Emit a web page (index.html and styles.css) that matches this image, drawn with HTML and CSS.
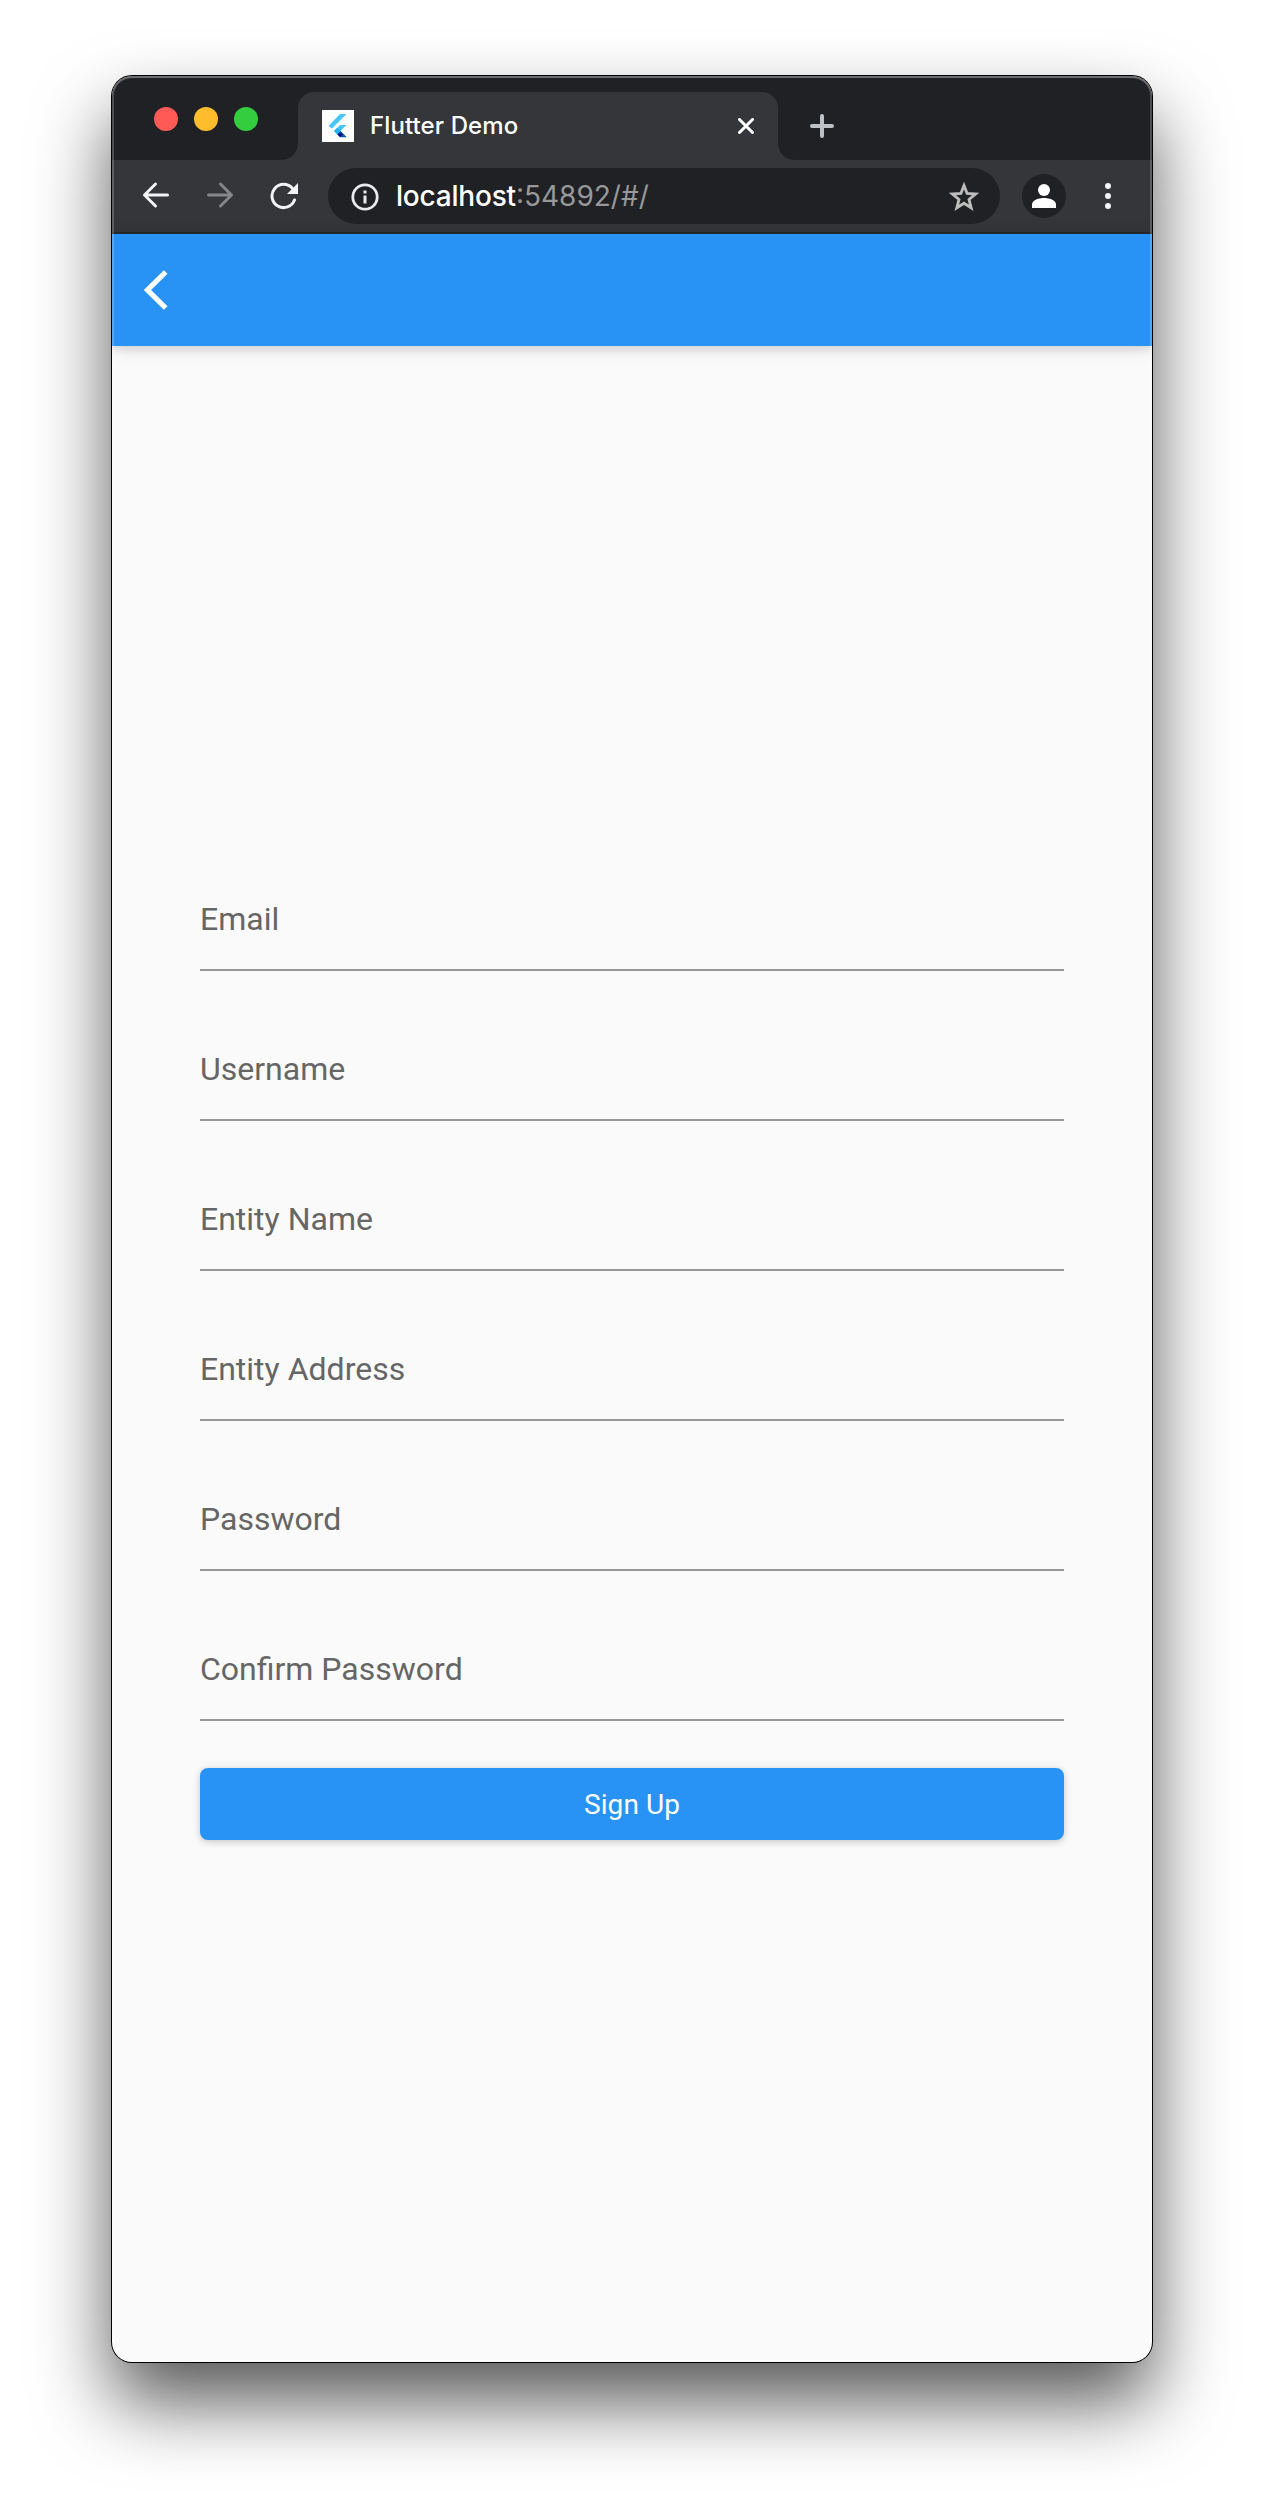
FILE: index.html
```html
<!DOCTYPE html>
<html lang="en">
<head>
<meta charset="utf-8">
<title>Flutter Demo</title>
<link rel="stylesheet" href="styles.css">
</head>
<body>
<div class="window">
  <header class="tabstrip">
    <div class="lights">
      <span class="light light-close"></span>
      <span class="light light-min"></span>
      <span class="light light-max"></span>
    </div>
    <div class="tab">
      <svg class="favicon" width="32" height="32" viewBox="0 0 32 32">
        <rect width="32" height="32" fill="#fff"/>
        <path d="M18 4h6.500L10 18.500 6.500 16z" fill="#47c5fb"/>
        <path d="M18 15h6.500L18.500 21l6 6H18l-6-6z" fill="#47c5fb"/>
        <path d="M12 21l3.300-3.300L18.600 21l-3.300 3.300z" fill="#22b2f2"/>
        <path d="M15.300 24.300L18.600 21l6 6.200H18z" fill="#00569e"/>
        <path d="M15.300 24.300l3.300-1.500 2.400 1.500-3 2.500z" fill="#00108a"/>
      </svg>
      <span class="tab-title">Flutter Demo</span>
      <svg class="tab-close" width="16" height="16" viewBox="0 0 16 16"><path d="M1.500 1.500l13 13M14.500 1.500l-13 13" stroke="#fff" stroke-width="3" stroke-linecap="round"/></svg>
    </div>
    <svg class="new-tab" width="24" height="24" viewBox="0 0 24 24"><path d="M12 2v20M2 12h20" stroke="#bdc1c6" stroke-width="4" stroke-linecap="round"/></svg>
  </header>
  <div class="toolbar">
    <svg class="nav-back" width="28" height="28" viewBox="0 0 28 28" fill="none" stroke="#f1f3f4" stroke-width="3" stroke-linecap="round" stroke-linejoin="round"><path d="M25.500 14H2.500M13.500 3L2.500 14l11 11"/></svg>
    <svg class="nav-forward" width="28" height="28" viewBox="0 0 28 28" fill="none" stroke="#85868a" stroke-width="3" stroke-linecap="round" stroke-linejoin="round"><path d="M2.500 14h23M14.500 3l11 11-11 11"/></svg>
    <svg class="nav-reload" width="28" height="28" viewBox="0 0 28 28"><path d="M24.500 18A11.600 11.600 0 1 1 22.500 6.500" fill="none" stroke="#f1f3f4" stroke-width="3" stroke-linecap="round"/><path d="M28 1v11h-11z" fill="#f1f3f4"/></svg>
    <div class="omnibox">
      <svg class="info" width="28" height="28" viewBox="0 0 28 28"><circle cx="14" cy="14" r="12.200" fill="none" stroke="#e8eaed" stroke-width="2.800"/><path d="M12.500 7.500h3v3h-3zM12.500 12.500h3v8h-3z" fill="#e8eaed"/></svg>
      <span class="url">localhost<span class="url-rest">:54892/#/</span></span>
      <svg class="star" width="30" height="29" viewBox="0 0 30 29"><path d="M15 3.500l3.100 8 8.500.5-6.600 5.400 2.200 8.400L15 21.200l-7.200 4.600 2.200-8.400L3.400 12l8.500-.5z" fill="none" stroke="#bdbdbd" stroke-width="2.800"/></svg>
    </div>
    <svg class="avatar" width="44" height="44" viewBox="0 0 44 44"><circle cx="22" cy="22" r="22" fill="#202124"/><circle cx="22" cy="16" r="6" fill="#fff"/><path d="M10 34v-3.500c0-4.500 7-6.500 12-6.500s12 2 12 6.500V34z" fill="#fff"/></svg>
    <svg class="menu" width="6" height="26" viewBox="0 0 6 26" fill="#f1f3f4"><circle cx="3" cy="3" r="3"/><circle cx="3" cy="13" r="3"/><circle cx="3" cy="23" r="3"/></svg>
  </div>
  <main class="page">
    <div class="appbar">
      <svg width="24" height="40" viewBox="0 0 24 40"><path d="M21.700 2L3.500 20l18.200 18" fill="none" stroke="#fff" stroke-width="5.200"/></svg>
    </div>
    <form class="form">
      <div class="field">Email</div>
      <div class="field">Username</div>
      <div class="field">Entity Name</div>
      <div class="field">Entity Address</div>
      <div class="field">Password</div>
      <div class="field">Confirm Password</div>
      <button class="submit" type="button">Sign Up</button>
    </form>
  </main>
</div>
</body>
</html>
```
FILE: styles.css
```css
* { box-sizing: border-box; }
body {
  margin: 0;
  padding: 76px 112px 0;
  height: 2510px;
  background: #fff;
  overflow: hidden;
  font-family: Roboto, sans-serif;
}
svg { display: block; flex: none; }
.window {
  position: relative;
  width: 1040px;
  height: 2286px;
  border-radius: 20px;
  overflow: hidden;
  background: #fafafa;
  box-shadow: 0 0 0 1px #000, 0 40px 76px rgba(0, 0, 0, .66);
}
/* light rim drawn over the window content */
.window::after {
  content: "";
  position: absolute;
  inset: 0;
  border-radius: 20px;
  box-shadow: inset 0 0 0 2px rgba(255, 255, 255, .2), inset 0 2px 0 rgba(255, 255, 255, .18);
  pointer-events: none;
}
.tabstrip {
  height: 84px;
  display: flex;
  align-items: flex-end;
  background: #202124;
}
.lights {
  width: 186px;
  padding: 0 0 29px 42px;
  display: flex;
  gap: 16px;
}
.light { width: 24px; height: 24px; border-radius: 50%; }
.light-close { background: #ff5a56; }
.light-min { background: #ffbd2e; }
.light-max { background: #35cd40; }
.tab {
  position: relative;
  width: 480px;
  height: 68px;
  padding: 0 24px;
  display: flex;
  align-items: center;
  background: #35363a;
  border-radius: 16px 16px 0 0;
}
.tab::before, .tab::after {
  content: "";
  position: absolute;
  bottom: 0;
  width: 16px;
  height: 16px;
}
.tab::before { left: -16px; background: radial-gradient(circle at 0 0, transparent 15.500px, #35363a 16px); }
.tab::after { right: -16px; background: radial-gradient(circle at 100% 0, transparent 15.500px, #35363a 16px); }
.tab-title {
  flex: 1;
  margin-left: 16px;
  font: 450 24px/32px Inter, sans-serif;
  letter-spacing: .1px;
  color: #fff;
}
.new-tab { margin: 0 0 22px 32px; }
.toolbar {
  height: 74px;
  padding: 8px 41px 8px 30px;
  display: flex;
  align-items: flex-start;
  background: #35363a;
  border-bottom: 2px solid #292a2d;
}
.nav-back, .nav-forward { margin-top: 13px; }
.nav-forward { margin-left: 36px; }
.nav-reload { margin: 14px 0 0 36px; }
.omnibox {
  width: 672px;
  height: 56px;
  margin-left: 30px;
  padding: 0 21px 0 23px;
  display: flex;
  align-items: center;
  background: #202124;
  border-radius: 28px;
}
.info { margin-top: 1px; }
.url {
  flex: 1;
  margin-left: 17px;
  padding-top: 1px;
  font: 450 28px/55px Inter, sans-serif;
  letter-spacing: -.2px;
  color: #fff;
}
.url-rest { color: #97989a; font-weight: 400; letter-spacing: 0; }
.avatar { margin: 6px 0 0 22px; }
.menu { margin: 15px 0 0 auto; }
.appbar {
  height: 112px;
  padding: 36px 32px;
  background: #2893f4;
  box-shadow: 0 4px 8px rgba(0, 0, 0, .08), 0 2px 18px rgba(0, 0, 0, .12);
}
.form { padding: 503px 88px 0; }
.field {
  height: 122px;
  margin-bottom: 28px;
  padding-top: 50px;
  font-size: 32px;
  line-height: 40px;
  color: #666;
  border-bottom: 2px solid #979797;
}
.submit {
  display: block;
  width: 864px;
  height: 72px;
  margin-top: 47px;
  padding: 1px 0 0;
  border: 0;
  border-radius: 8px;
  background: #2893f4;
  box-shadow: 0 3px 6px rgba(0, 0, 0, .08), 0 1px 8px rgba(0, 0, 0, .14);
  font: 400 28px/71px Roboto, sans-serif;
  letter-spacing: .1px;
  color: #fff;
}
```
